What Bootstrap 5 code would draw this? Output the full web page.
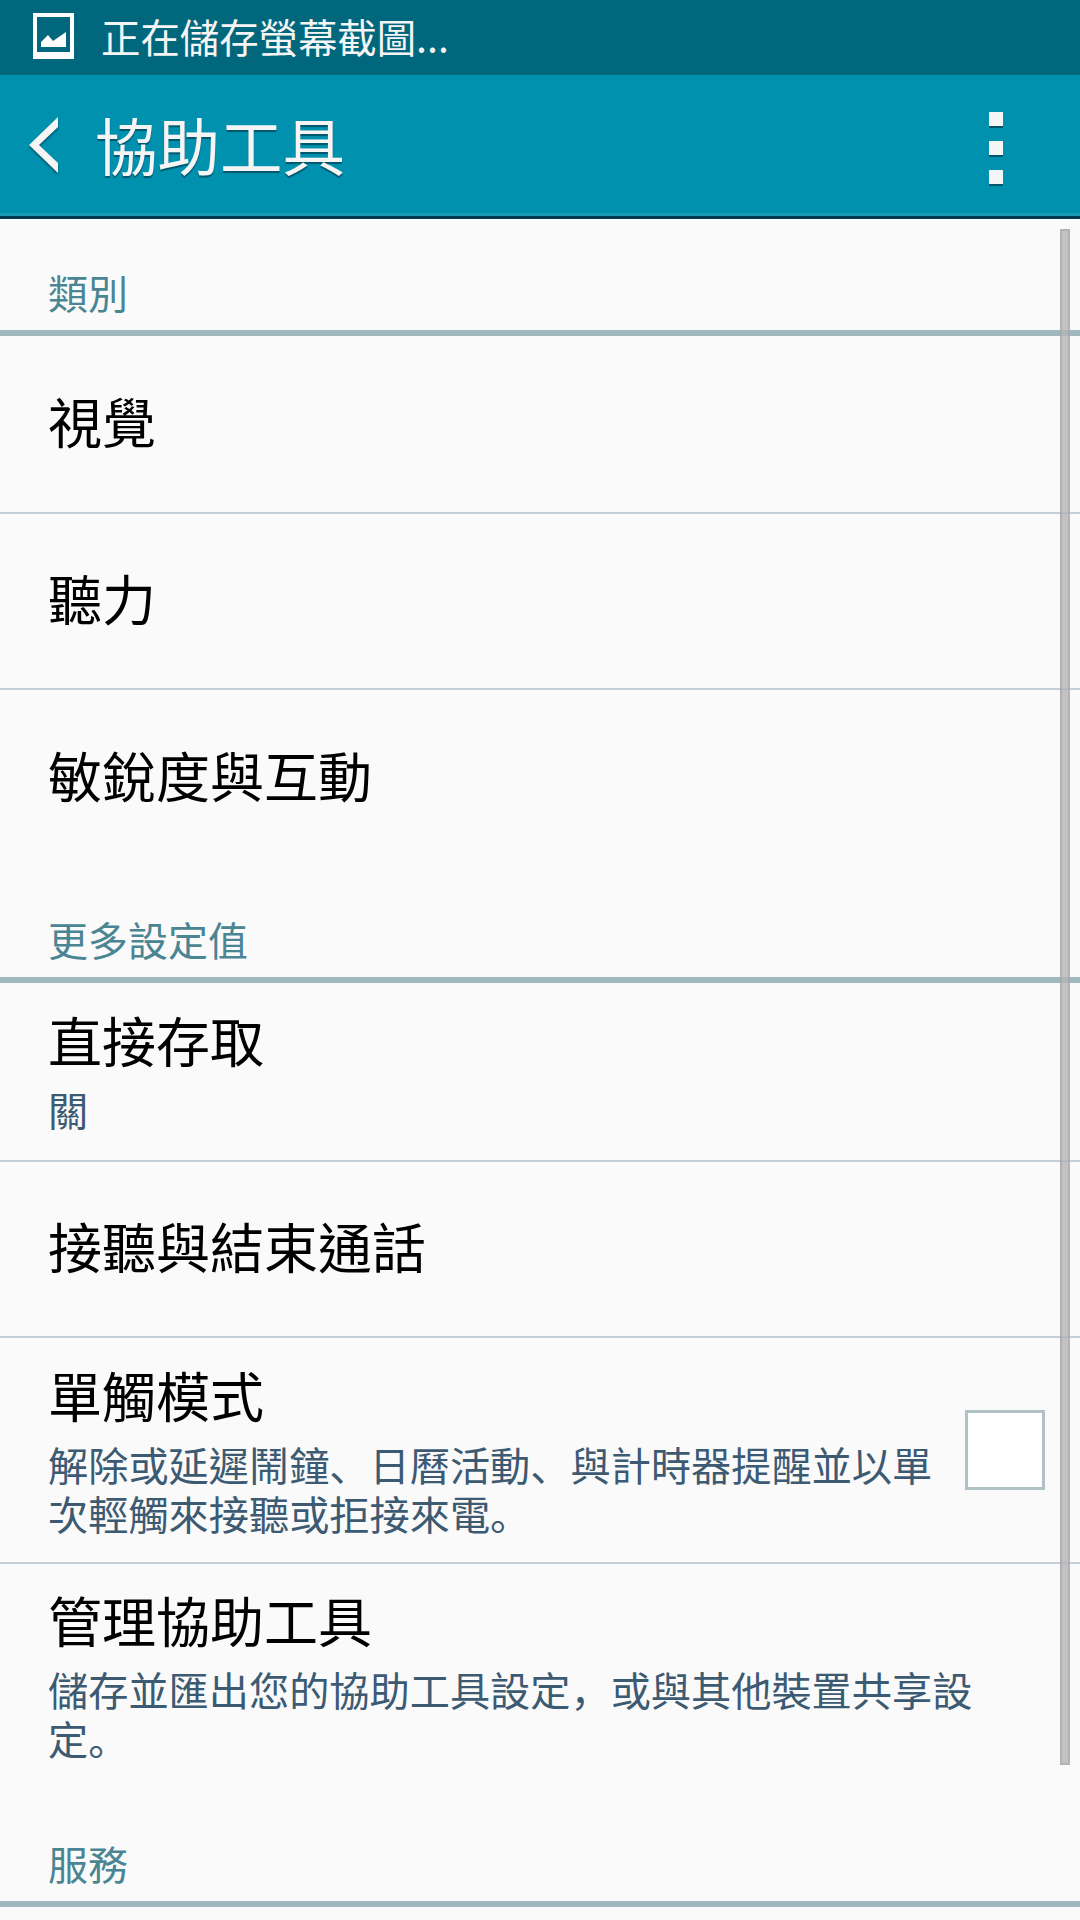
<!DOCTYPE html>
<html lang="zh-Hant">
<head>
<meta charset="utf-8">
<title>協助工具</title>
<link href="https://cdn.jsdelivr.net/npm/bootstrap@5.3.0/dist/css/bootstrap.min.css" rel="stylesheet">
<style>
html,body{width:1080px;height:1920px;overflow:hidden;margin:0}
body{background:#fafafa;font-family:"Noto Sans CJK TC","Liberation Sans",sans-serif;position:relative;color:#000}
.stat-bar{height:75px;background:#00677c;padding-left:33px;gap:27px;color:#f5f5f5;font-size:39.4px;line-height:1}
.stat-txt{margin-top:-4px}
.stat-ico{display:block;margin-top:-3px}
.app-bar{height:144px;background:#0091af;border-bottom:3px solid #003a50;box-shadow:inset 0 -3px 0 #1a9ab5;color:#f5f5f5;padding-left:29px;padding-right:77px}
.back-ico{filter:drop-shadow(0 2px 1px #00566b);margin-top:-1px}
.app-title{font-size:62.5px;line-height:1;margin-left:37px;text-shadow:0 2px 1px #00566b;margin-top:-2px}
.dots{gap:15px;margin-top:4px}
.dots span{display:block;width:14px;height:14px;background:#f5f5f5;box-shadow:0 2px 0 #00566b}
.sect-head{height:117px;padding:0 48px 18px;color:#4a8593;font-size:40px;line-height:1;border-bottom:6px solid #a0b8bd}
.row-item{padding:0 35px 0 48px;border-bottom:2px solid #c3ced6}
.row-last{border-bottom:0}
.ri-h{font-size:54px;line-height:1;padding-bottom:6px}
.ri-two{padding-top:30px}
.ri-tl{padding-top:29px}
.ri-t{font-size:54px;line-height:54px}
.ri-s{font-size:40.2px;line-height:49px;color:#3d5a73;margin-top:17px}
.pun{font-family:"Noto Sans CJK SC",sans-serif}
.h-178{height:178px}
.h-179{height:179px}
.h-176{height:176px}
.h-226{height:226px}
.txt-wrap{padding-right:25px;margin-top:4px}
.chk{width:80px;height:80px;border:3px solid #b0c2c6;background:#fff;flex:none}
.sbar{position:absolute;left:1060px;top:229px;width:10px;height:1536px;background:rgba(180,180,183,.8);border:2px solid rgba(150,150,155,.35)}
</style>
</head>
<body>
<div class="stat-bar d-flex align-items-center">
  <svg class="stat-ico" width="41" height="46" viewBox="0 0 41 46"><path fill="#fff" fill-rule="evenodd" d="M0 0H41V46H0ZM4 4V39H37V4Z"/><path fill="#fff" d="M8 34V29L15 22L20 28L33 19V34Z"/></svg>
  <div class="stat-txt">正在儲存螢幕截圖...</div>
</div>
<div class="app-bar d-flex align-items-center">
  <svg class="back-ico" width="29" height="56" viewBox="0 0 29 56"><path fill="#f5f5f5" d="M29 0L0 28L29 56V46L10 28L29 10Z"/></svg>
  <div class="app-title flex-grow-1">協助工具</div>
  <div class="dots d-flex flex-column"><span></span><span></span><span></span></div>
</div>
<div class="sect-head d-flex align-items-end">類別</div>
<div class="row-item ri-h h-178 d-flex align-items-center">視覺</div>
<div class="row-item ri-h h-176 d-flex align-items-center">聽力</div>
<div class="row-item row-last ri-h h-176 d-flex align-items-center">敏銳度與互動</div>
<div class="sect-head d-flex align-items-end">更多設定值</div>
<div class="row-item ri-two h-179"><div class="ri-t">直接存取</div><div class="ri-s">關</div></div>
<div class="row-item ri-h d-flex align-items-center h-176">接聽與結束通話</div>
<div class="row-item d-flex align-items-center h-226">
  <div class="flex-grow-1 txt-wrap"><div class="ri-t">單觸模式</div><div class="ri-s">解除或延遲鬧鐘<span class="pun" lang="zh-Hans">、</span>日曆活動<span class="pun" lang="zh-Hans">、</span>與計時器提醒並以單次輕觸來接聽或拒接來電<span class="pun" lang="zh-Hans">。</span></div></div>
  <div class="chk"></div>
</div>
<div class="row-item row-last ri-tl h-226"><div class="ri-t">管理協助工具</div><div class="ri-s">儲存並匯出您的協助工具設定<span class="pun" lang="zh-Hans">，</span>或與其他裝置共享設定<span class="pun" lang="zh-Hans">。</span></div></div>
<div class="sect-head d-flex align-items-end">服務</div>
<div class="sbar"></div>
<script src="https://cdn.jsdelivr.net/npm/bootstrap@5.3.0/dist/js/bootstrap.bundle.min.js"></script>
</body>
</html>
